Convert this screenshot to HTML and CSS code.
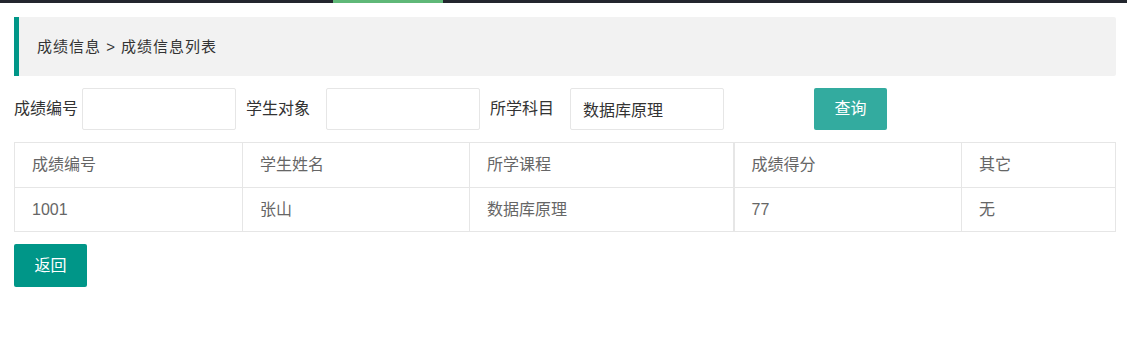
FILE: index.html
```html
<!DOCTYPE html>
<html lang="zh-CN">
<head>
    <meta charset="UTF-8">
    <meta name="viewport" content="width=device-width, initial-scale=1.0">
    <title>成绩信息列表</title>
    <link rel="stylesheet" href="styles.css">
</head>
<body>
    <div class="top-bar">
        <span class="top-bar-active"></span>
    </div>

    <div class="page">
        <!-- breadcrumb -->
        <div class="quote">成绩信息 &gt; 成绩信息列表</div>

        <!-- search form -->
        <form class="search-form" onsubmit="return false;">
            <label class="form-label first" for="score_id">成绩编号</label>
            <input class="form-input" type="text" id="score_id">

            <label class="form-label" for="student">学生对象</label>
            <input class="form-input" type="text" id="student">

            <label class="form-label" for="subject">所学科目</label>
            <input class="form-input" type="text" id="subject" value="数据库原理">

            <button class="btn btn-light search-btn" type="submit">查询</button>
        </form>

        <!-- result table -->
        <table class="data-table">
            <colgroup>
                <col style="width: 228px">
                <col style="width: 227px">
                <col style="width: 264px">
                <col style="width: 228px">
                <col style="width: 154px">
            </colgroup>
            <thead>
                <tr>
                    <th>成绩编号</th>
                    <th>学生姓名</th>
                    <th>所学课程</th>
                    <th class="split">成绩得分</th>
                    <th>其它</th>
                </tr>
            </thead>
            <tbody>
                <tr>
                    <td>1001</td>
                    <td>张山</td>
                    <td>数据库原理</td>
                    <td class="split">77</td>
                    <td>无</td>
                </tr>
            </tbody>
        </table>

        <button class="btn back-btn" onclick="history.back()">返回</button>
    </div>
</body>
</html>
```

FILE: styles.css
```css
* {
    box-sizing: border-box;
    margin: 0;
    padding: 0;
}

body {
    font-family: "Liberation Sans", "Noto Sans CJK SC", sans-serif;
    font-size: 16px;
    color: #333;
    background-color: #fff;
}

.top-bar {
    height: 3px;
    background-color: #23262e;
    padding-left: 333px;
}

.top-bar-active {
    display: block;
    width: 110px;
    height: 3px;
    background-color: #5fb878;
}

.page {
    padding: 14px 11px 0 14px;
}

.quote {
    padding: 18px 18px;
    line-height: 23px;
    font-size: 15px;
    letter-spacing: 1px;
    color: #333;
    background-color: #f2f2f2;
    border-left: 5px solid #009688;
    border-radius: 0 2px 2px 0;
}

.search-form {
    display: flex;
    align-items: center;
    margin-top: 12px;
    height: 42px;
}

.form-label {
    width: 90px;
    padding-left: 10px;
    line-height: 42px;
    white-space: nowrap;
}

.form-label.first {
    width: 68px;
    padding-left: 0;
}

.form-input {
    width: 154px;
    height: 42px;
    padding: 0 12px;
    font-family: inherit;
    font-size: 16px;
    color: #333;
    background-color: #fff;
    border: 1px solid #e6e6e6;
    border-radius: 2px;
    outline: none;
}

.form-input:focus {
    border-color: #d2d2d2;
}

.btn {
    display: inline-block;
    height: 42px;
    line-height: 42px;
    padding: 0 18px;
    font-family: inherit;
    font-size: 16px;
    color: #fff;
    background-color: #009688;
    border: none;
    border-radius: 2px;
    cursor: pointer;
}

.btn-light {
    background-color: #33ab9f;
}

.search-btn {
    width: 73px;
    margin-left: 90px;
}

.data-table {
    width: 1101px;
    margin-top: 12px;
    border-collapse: collapse;
    table-layout: fixed;
    font-size: 16px;
    color: #666;
}

.data-table th,
.data-table td {
    height: 45px;
    padding: 0 17px;
    line-height: 20px;
    text-align: left;
    font-weight: normal;
    border: 1px solid #e6e6e6;
}

.data-table td {
    height: 44px;
}

.data-table .split {
    border-left-width: 2px;
}

.back-btn {
    display: block;
    width: 73px;
    height: 43px;
    line-height: 43px;
    margin-top: 12px;
}
```
